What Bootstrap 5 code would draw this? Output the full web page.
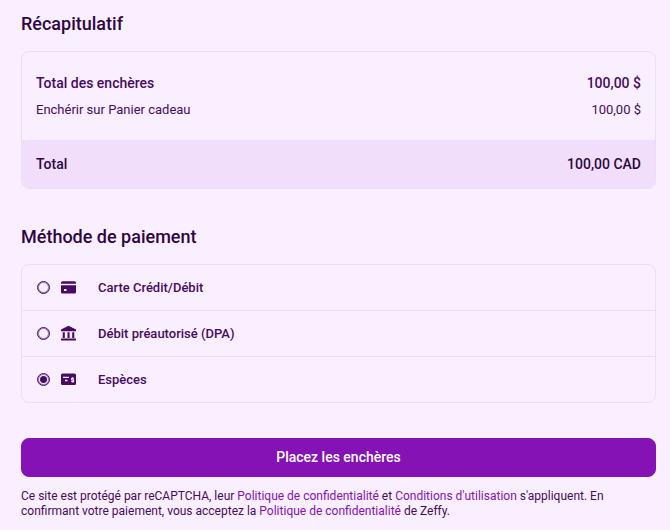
<!DOCTYPE html>
<html lang="fr">
<head>
<meta charset="utf-8">
<meta name="viewport" content="width=device-width, initial-scale=1">
<title>Récapitulatif</title>
<link href="https://cdn.jsdelivr.net/npm/bootstrap@5.3.0/dist/css/bootstrap.min.css" rel="stylesheet">
<style>
  body { background: #faefff; color: #460b62; font-family: Roboto, "Liberation Sans", sans-serif; font-size: 13px; line-height: 20px; }
  main { padding: 12px 14px 2px 21px; }
  .section-title { font-size: 18px; line-height: 24px; font-weight: 500; color: #2e0643; margin-bottom: 15px; }
  .panel { border: 1px solid #eddcf8; border-radius: 8px; overflow: hidden; }
  .summary { margin-bottom: 36px; }
  .methods { margin-bottom: 35px; }
  .summary-lines { padding: 19px 14px 18px; }
  .strong-line { font-size: 14px; line-height: 24px; font-weight: 500; }
  .detail-line { line-height: 24px; margin-top: 3px; }
  .total-line { background: #f0defa; color: #2e0643; padding: 12px 14px; }
  .method { box-sizing: content-box; padding: 0 15px; height: 45px; cursor: pointer; font-weight: 500; }
  .method + .method { border-top: 1px solid #eddcf8; }
  .method input { appearance: none; flex: none; width: 13px; height: 13px; margin: 0 10px 0 0; border: 1px solid #460b62; border-radius: 50%; box-shadow: inset 0 0 0 1px #460b6280; }
  .method input:checked { background: radial-gradient(circle, #460b62 3px, transparent 4px); }
  .method svg { flex: none; width: 17px; height: 17px; margin-right: 21px; fill: #460b62; }
  .submit { --bs-btn-bg: #8412b5; --bs-btn-border-color: #8412b5; --bs-btn-color: #fff; --bs-btn-hover-bg: #700c9c; --bs-btn-hover-color: #fff; --bs-btn-font-size: 14px; --bs-btn-font-weight: 500; --bs-btn-line-height: 23px; --bs-btn-padding-y: 7px; --bs-btn-border-radius: 8px; }
  .legal { font-size: 12px; line-height: 15px; margin: 12px 0 0; }
  .legal a { color: #8412b5; text-decoration: none; }
</style>
</head>
<body>
<main>
  <h2 class="section-title">Récapitulatif</h2>
  <section class="panel summary">
    <div class="summary-lines">
      <div class="d-flex justify-content-between strong-line"><span>Total des enchères</span><span>100,00 $</span></div>
      <div class="d-flex justify-content-between detail-line"><span>Enchérir sur Panier cadeau</span><span>100,00 $</span></div>
    </div>
    <div class="d-flex justify-content-between strong-line total-line"><span>Total</span><span>100,00 CAD</span></div>
  </section>

  <h2 class="section-title">Méthode de paiement</h2>
  <form>
    <div class="panel methods">
      <label class="method d-flex align-items-center" for="card-pay">
        <input type="radio" name="method" id="card-pay">
        <svg viewBox="0 0 17 17" aria-hidden="true"><path d="M2.500 2.300h12q1.500 0 1.500 1.500V4.700H1V3.800Q1 2.300 2.500 2.300zM1 6.200h15v6.800q0 1.500-1.500 1.500h-12Q1 14.500 1 13zM4 10v2h2.500v-2z" fill-rule="evenodd"/></svg>
        <span>Carte Crédit/Débit</span>
      </label>
      <label class="method d-flex align-items-center" for="debit-pay">
        <input type="radio" name="method" id="debit-pay">
        <svg viewBox="0 0 17 17" aria-hidden="true"><path d="M8.500 .8L16 4.600V6.300H1V4.600zM2.700 7.300h2.100V13H2.700zM7.500 7.300h2.100V13H7.500zM12.200 7.300h2.100V13h-2.100zM1 13.600h15v2H1z"/></svg>
        <span>Débit préautorisé (DPA)</span>
      </label>
      <label class="method d-flex align-items-center" for="cash-pay">
        <input type="radio" name="method" id="cash-pay" checked>
        <svg viewBox="0 0 17 17" aria-hidden="true"><path d="M2.500 2.500h12q1.500 0 1.500 1.500v8.500q0 1.500-1.500 1.500h-12Q1 14 1 12.500V4Q1 2.500 2.500 2.500z"/><path d="M3 6.300h6M5 9.500h2.500M13.800 7.300h-2v1.500h1.700v1.800h-2.200M12.600 6.200v1M12.600 10.600v1" fill="none" stroke="#faefff" stroke-width="1.300"/></svg>
        <span>Espèces</span>
      </label>
    </div>
    <button type="submit" class="btn submit w-100">Placez les enchères</button>
  </form>
  <p class="legal">Ce site est protégé par reCAPTCHA, leur <a href="#">Politique de confidentialité</a> et <a href="#">Conditions d'utilisation</a> s'appliquent. En confirmant votre paiement, vous acceptez la <a href="#">Politique de confidentialité</a> de Zeffy.</p>
</main>
<script src="https://cdn.jsdelivr.net/npm/bootstrap@5.3.0/dist/js/bootstrap.bundle.min.js"></script>
</body>
</html>
